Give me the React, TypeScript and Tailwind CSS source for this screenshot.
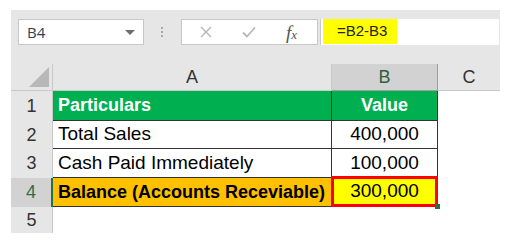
import React from 'react';

const rowHeights = [30, 28, 29, 29, 26];

const App: React.FC = () => {
  const cellFont = { fontFamily: '"Liberation Sans", Arial, sans-serif' };

  return (
    <div className="w-[506px] h-[245px] bg-white pt-[10px] pl-[11px] overflow-hidden" style={cellFont}>
      {/* formula bar */}
      <div className="w-[489px] h-[54px] bg-[#e6e6e6] flex items-start pt-[9px]">
        <div className="ml-[7px] w-[126px] h-[26px] bg-white border border-[#c8c8c8] flex items-center justify-between pl-[8px] pr-[8px]">
          <span className="text-[15px] text-[#2d3f57]" style={{ fontFamily: '"Open Sans", sans-serif' }}>B4</span>
          <span className="w-0 h-0 border-l-[5px] border-r-[5px] border-t-[5px] border-l-transparent border-r-transparent border-t-[#6d6d6d]" />
        </div>
        <div className="ml-[17px] mt-[8px] flex flex-col gap-[2px]">
          <span className="w-[2px] h-[2px] bg-[#a8a8a8]" />
          <span className="w-[2px] h-[2px] bg-[#a8a8a8]" />
          <span className="w-[2px] h-[2px] bg-[#a8a8a8]" />
        </div>
        <div className="ml-[18px] w-[137px] h-[26px] bg-white border border-[#c8c8c8] flex items-center">
          <svg className="ml-[18px]" width="12" height="12" viewBox="0 0 12 12">
            <path d="M1 1 L11 11 M11 1 L1 11" stroke="#b4b4b4" strokeWidth="1.4" />
          </svg>
          <svg className="ml-[30px]" width="14" height="12" viewBox="0 0 14 12">
            <path d="M1 6.5 L5 10.5 L13 1.5" stroke="#b8b8b8" strokeWidth="1.8" fill="none" />
          </svg>
          <span className="ml-[30px] text-[#555] italic text-[19px] leading-none" style={{ fontFamily: '"Liberation Serif", serif' }}>
            f<span className="text-[13px]">x</span>
          </span>
        </div>
        <div className="ml-[2px] w-[179px] h-[26px] bg-white border-l border-[#c8c8c8] flex items-stretch pl-[2px]">
          <div className="w-[74px] h-[25px] bg-[#ffff00] flex items-center pl-[14px]">
            <span className="text-[15px] text-[#222]">=B2-B3</span>
          </div>
        </div>
      </div>

      {/* grid */}
      <div className="grid grid-cols-[42px_279px_106px_62px] w-[489px]">
        {/* header row */}
        <div className="h-[27px] bg-[#e6e6e6] border-r border-[#c8c8c8] border-b flex items-end justify-end p-[3px]">
          <svg width="20" height="20" viewBox="0 0 20 20">
            <polygon points="20,0 20,20 0,20" fill="#b8b8b8" />
          </svg>
        </div>
        <div className="h-[27px] bg-[#e6e6e6] border-r border-b border-[#c8c8c8] flex items-center justify-center text-[18px] text-[#333]">A</div>
        <div className="h-[27px] bg-[#d2d2d2] border-r border-b border-[#9e9e9e] flex items-center justify-center text-[18px] text-[#2f5f3f]">B</div>
        <div className="h-[27px] bg-[#e6e6e6] border-b border-[#c8c8c8] flex items-center justify-center text-[18px] text-[#333]">C</div>

        {/* row 1 */}
        <RowHead n="1" h={rowHeights[0]} />
        <div className="bg-[#00b050] border-r border-b border-[#333] flex items-center pl-[5px] text-[18px] font-bold text-white" style={{ height: rowHeights[0] }}>Particulars</div>
        <div className="bg-[#00b050] border-r border-b border-[#333] flex items-center justify-center text-[18px] font-bold text-white" style={{ height: rowHeights[0] }}>Value</div>
        <div className="bg-white" />

        {/* row 2 */}
        <RowHead n="2" h={rowHeights[1]} />
        <div className="bg-white border-r border-b border-[#333] flex items-center pl-[5px] text-[19px] text-black" style={{ height: rowHeights[1] }}>Total Sales</div>
        <div className="bg-white border-r border-b border-[#333] flex items-center justify-center text-[19px] text-black" style={{ height: rowHeights[1] }}>400,000</div>
        <div className="bg-white" />

        {/* row 3 */}
        <RowHead n="3" h={rowHeights[2]} />
        <div className="bg-white border-r border-b border-[#333] flex items-center pl-[5px] text-[19px] text-black" style={{ height: rowHeights[2] }}>Cash Paid Immediately</div>
        <div className="bg-white border-r border-b border-[#333] flex items-center justify-center text-[19px] text-black" style={{ height: rowHeights[2] }}>100,000</div>
        <div className="bg-white" />

        {/* row 4 */}
        <RowHead n="4" h={rowHeights[3]} active />
        <div className="bg-[#ffc000] border-r border-b border-[#333] flex items-center pl-[5px] text-[18px] font-bold text-black" style={{ height: rowHeights[3] }}>Balance (Accounts Receviable)</div>
        <div className="relative bg-[#ffff00] border-[3px] border-[#ff0000] -ml-[1px] -mt-[2px] flex items-center justify-center text-[19px] text-black" style={{ height: rowHeights[3] + 2 }}>
          300,000
          <span className="absolute -right-[5px] -bottom-[5px] w-[5px] h-[5px] bg-[#217346]" />
        </div>
        <div className="bg-white" />

        {/* row 5 */}
        <RowHead n="5" h={rowHeights[4]} />
        <div className="bg-white" />
        <div className="bg-white" />
        <div className="bg-white" />
      </div>
    </div>
  );
};

const RowHead: React.FC<{ n: string; h: number; active?: boolean }> = ({ n, h, active }) => (
  <div
    className={
      active
        ? 'bg-[#d2d2d2] border-r-2 border-[#217346] flex items-center justify-center text-[18px] text-[#2f6f4a]'
        : 'bg-[#e6e6e6] border-r border-[#c8c8c8] flex items-center justify-center text-[18px] text-[#333]'
    }
    style={{ height: h }}
  >
    {n}
  </div>
);

export default App;
